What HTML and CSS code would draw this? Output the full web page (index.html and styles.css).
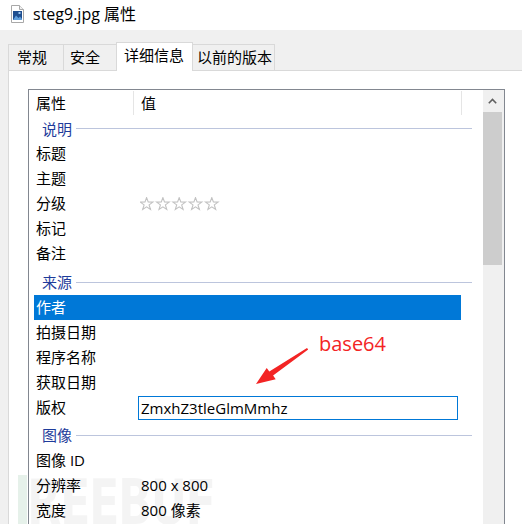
FILE: index.html
```html
<!DOCTYPE html>
<html lang="zh-CN">
<head>
<meta charset="utf-8">
<title>steg9.jpg 属性</title>
<link rel="stylesheet" href="styles.css">
</head>
<body>
<div class="window">
  <div class="titlebar">
    <svg class="ficon" width="13" height="18" viewBox="0 0 13 18">
      <path d="M0.5 0.5 H8.5 L12.5 4.5 V17.5 H0.5 Z" fill="#fff" stroke="#a8a8a8"/>
      <path d="M8.5 0.5 V4.5 H12.5" fill="#f0f0f0" stroke="#a8a8a8"/>
      <rect x="2" y="6" width="9" height="9" fill="#1f4e8f"/>
      <path d="M2 15 L5 10.5 L7.5 13 L9 11.5 L11 14 V15 Z" fill="#5f9fdc"/>
      <rect x="7.5" y="7" width="2" height="2" fill="#9cc8f0"/>
    </svg>
    <span class="title">steg9.jpg 属性</span>
  </div>
  <div class="tabbar">
    <div class="tab tab-general">常规</div>
    <div class="tab tab-security">安全</div>
    <div class="tab tab-details">详细信息</div>
    <div class="tab tab-prev">以前的版本</div>
  </div>
  <div class="panel">
    <div class="list">
      <div class="content">
        <div class="head">
          <div class="hc hc-name">属性</div>
          <div class="hc hc-value">值</div>
          <div class="hc hc-rest"></div>
        </div>
        <div class="group group-first"><span>说明</span><i></i></div>
        <div class="row"><span class="k">标题</span><span class="v"></span></div>
        <div class="row"><span class="k">主题</span><span class="v"></span></div>
        <div class="row"><span class="k">分级</span><span class="v">
          <svg class="stars" width="82" height="14" viewBox="0 0 82 14">
            <defs>
              <polygon id="st" points="6.6,0.6 8.2,5.0 12.9,5.1 9.1,7.9 10.5,12.5 6.6,9.8 2.7,12.5 4.1,7.9 0.3,5.1 5.0,5.0" fill="none" stroke="#c2c2c2" stroke-width="1.1"/>
            </defs>
            <use href="#st" x="0"/>
            <use href="#st" x="16.3"/>
            <use href="#st" x="32.6"/>
            <use href="#st" x="48.9"/>
            <use href="#st" x="65.2"/>
          </svg>
        </span></div>
        <div class="row"><span class="k">标记</span><span class="v"></span></div>
        <div class="row"><span class="k">备注</span><span class="v"></span></div>
        <div class="group group-source"><span>来源</span><i></i></div>
        <div class="row selected"><span class="k">作者</span><span class="v"></span></div>
        <div class="row"><span class="k">拍摄日期</span><span class="v"></span></div>
        <div class="row"><span class="k">程序名称</span><span class="v"></span></div>
        <div class="row"><span class="k">获取日期</span><span class="v"></span></div>
        <div class="row"><span class="k">版权</span><span class="v"><span class="edit">ZmxhZ3tleGlmMmhz</span></span></div>
        <div class="group group-image"><span>图像</span><i></i></div>
        <div class="row"><span class="k">图像 ID</span><span class="v"></span></div>
        <div class="row"><span class="k">分辨率</span><span class="v">800 x 800</span></div>
        <div class="row"><span class="k">宽度</span><span class="v">800 像素</span></div>
      </div>
      <div class="scroll">
        <div class="up">
          <svg width="9" height="6" viewBox="0 0 9 6"><polyline points="0.8,5.2 4.5,1.5 8.2,5.2" fill="none" stroke="#606060" stroke-width="1.6"/></svg>
        </div>
        <div class="thumb"></div>
      </div>
    </div>
  </div>

  <div class="note">
    <svg class="arrow" width="60" height="45" viewBox="0 0 60 45">
      <polygon points="53,2 54.2,3.6 19.1,29.6 21.7,33.3 2,38 12.7,21.9 15.3,25.6" fill="#f32424"/>
    </svg>
    <span class="note-text">base64</span>
  </div>

  <div class="watermark" aria-hidden="true"><b class="wm-bar"></b><span class="wm-text">REEBUF</span></div>
</div>
</body>
</html>
```
FILE: styles.css
```css
html, body {
  margin: 0;
  padding: 0;
}
body {
  width: 522px;
  height: 524px;
  overflow: hidden;
  background: #f0f0f0;
  font-family: "Open Sans", "Noto Sans CJK SC", sans-serif;
  font-size: 15px;
  color: #000;
}
.window {
  position: relative;
  width: 522px;
  height: 524px;
  display: flex;
  flex-direction: column;
}
.titlebar {
  height: 30px;
  background: #fff;
  display: flex;
  align-items: center;
  padding-left: 11px;
  flex: none;
}
.ficon {
  margin-top: -2px;
}
.title {
  margin-left: 9px;
  font-size: 16px;
  line-height: 20px;
  margin-top: -2px;
}
.tabbar {
  height: 40px;
  flex: none;
  display: flex;
  align-items: flex-end;
  padding-left: 8px;
  position: relative;
  z-index: 2;
}
.tab {
  box-sizing: border-box;
  height: 26px;
  border: 1px solid #d9d9d9;
  border-bottom: none;
  background: #f0f0f0;
  line-height: 24px;
  white-space: nowrap;
}
.tab + .tab {
  margin-left: -1px;
}
.tab-general {
  width: 56px;
  padding-left: 8px;
}
.tab-security {
  width: 54px;
  padding-left: 6px;
}
.tab-details {
  width: 77px;
  height: 29px;
  padding-left: 7px;
  background: #fff;
  margin-bottom: -1px;
  line-height: 24px;
  position: relative;
  z-index: 3;
}
.tab-prev {
  width: 83px;
  padding-left: 4px;
}
.panel {
  flex: 1;
  margin-left: 8px;
  background: #fff;
  border-top: 1px solid #d9d9d9;
  border-left: 1px solid #d9d9d9;
  padding: 18px 0 0 19px;
  min-height: 0;
}
.list {
  box-sizing: border-box;
  width: 477px;
  height: 500px;
  border: 1px solid #828790;
  display: flex;
}
.content {
  width: 454px;
  flex: none;
}
.head {
  height: 26px;
  display: flex;
  line-height: 26px;
}
.hc {
  box-sizing: border-box;
  height: 24px;
  margin-top: 1px;
  line-height: 24px;
  padding-left: 7px;
}
.hc-name {
  width: 105px;
  border-right: 1px solid #e5e5e5;
}
.hc-value {
  width: 328px;
  border-right: 1px solid #e5e5e5;
}
.hc-rest {
  flex: 1;
}
.group {
  display: flex;
  align-items: center;
  padding-left: 13px;
  padding-right: 11px;
  color: #1e3c9b;
}
.group span {
  line-height: 20px;
}
.group i {
  flex: 1;
  height: 1px;
  background: #bcc5dd;
  margin-left: 4px;
}
.group-first {
  height: 25px;
}
.group-source {
  height: 29px;
  padding-top: 3px;
  box-sizing: border-box;
}
.group-image {
  height: 28px;
  padding-top: 2px;
  box-sizing: border-box;
}
.row {
  height: 25px;
  margin-left: 5px;
  width: 427px;
  display: flex;
  align-items: center;
  line-height: 25px;
  white-space: nowrap;
}
.k {
  box-sizing: border-box;
  width: 100px;
  padding-left: 2px;
  flex: none;
}
.v {
  flex: 1;
  padding-left: 7px;
  display: flex;
  align-items: center;
}
.selected {
  background: #0078d7;
  color: #fff;
}
.stars {
  display: block;
  margin-top: 1px;
  margin-left: -1px;
}
.edit {
  box-sizing: border-box;
  width: 320px;
  height: 24px;
  margin-left: -3px;
  border: 1px solid #0078d7;
  padding-left: 2px;
  line-height: 22px;
  align-self: flex-start;
  margin-top: 0;
}
.scroll {
  width: 21px;
  flex: none;
  background: #f0f0f0;
}
.up {
  height: 22px;
  display: flex;
  align-items: center;
  justify-content: center;
  padding-right: 2px;
}
.up svg {
  display: block;
}
.thumb {
  width: 19px;
  height: 153px;
  background: #cdcdcd;
}
.note {
  position: absolute;
  left: 254px;
  top: 330px;
  width: 140px;
  height: 60px;
}
.arrow {
  position: absolute;
  left: 0;
  top: 16px;
}
.note-text {
  position: absolute;
  left: 65px;
  top: 0;
  font-size: 20px;
  line-height: 28px;
  color: #f32424;
}
.watermark {
  position: absolute;
  left: 18px;
  top: 475px;
  display: flex;
  align-items: flex-start;
  pointer-events: none;
}
.wm-bar {
  display: block;
  width: 9px;
  height: 60px;
  background: rgba(60, 150, 90, 0.13);
}
.wm-text {
  font-family: "DejaVu Sans", sans-serif;
  font-weight: bold;
  font-size: 62px;
  line-height: 56px;
  letter-spacing: -2px;
  color: rgba(0, 0, 0, 0.045);
  transform: scaleX(0.72);
  transform-origin: left top;
}
```
